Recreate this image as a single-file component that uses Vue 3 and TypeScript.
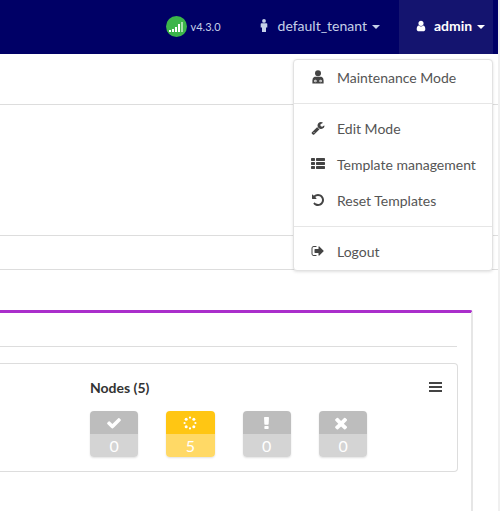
<script setup lang="ts">
const icons: Record<string, string> = {
  wrench: 'M448 1472q0-26-19-45t-45-19-45 19-19 45 19 45 45 19 45-19 19-45zm644-420l-682 682q-37 37-90 37-52 0-91-37l-106-108q-38-36-38-90 0-53 38-91l681-681q39 98 114.5 173.5t173.5 114.5zm634-435q0 39-23 106-47 134-164.5 217.5t-258.5 83.5q-185 0-316.5-131.5t-131.5-316.5 131.5-316.5 316.5-131.5q58 0 121.5 16.5t107.5 46.5q16 11 16 28t-16 28l-293 169v224l193 107q5-3 79-48.5t135.5-81 70.5-35.5q15 0 23.5 10t8.5 25z',
  list: 'M512 1248v192q0 40-28 68t-68 28h-320q-40 0-68-28t-28-68v-192q0-40 28-68t68-28h320q40 0 68 28t28 68zm0-512v192q0 40-28 68t-68 28h-320q-40 0-68-28t-28-68v-192q0-40 28-68t68-28h320q40 0 68 28t28 68zm1280 512v192q0 40-28 68t-68 28h-960q-40 0-68-28t-28-68v-192q0-40 28-68t68-28h960q40 0 68 28t28 68zm-1280-1024v192q0 40-28 68t-68 28h-320q-40 0-68-28t-28-68v-192q0-40 28-68t68-28h320q40 0 68 28t28 68zm1280 512v192q0 40-28 68t-68 28h-960q-40 0-68-28t-28-68v-192q0-40 28-68t68-28h960q40 0 68 28t28 68zm0-512v192q0 40-28 68t-68 28h-960q-40 0-68-28t-28-68v-192q0-40 28-68t68-28h960q40 0 68 28t28 68z',
  undo: 'M1664 896q0 156-61 298t-164 245-245 164-298 61q-172 0-327-72.5t-264-204.5q-7-10-6.5-22.5t8.5-20.5l137-138q10-9 25-9 16 2 23 12 73 95 179 147t225 52q104 0 198.5-40.5t163.5-109.5 109.5-163.5 40.5-198.5-40.5-198.5-109.5-163.5-163.5-109.5-198.5-40.5q-98 0-188 35.5t-160 101.5l137 138q31 30 14 69-17 40-59 40h-448q-26 0-45-19t-19-45v-448q0-42 40-59 39-17 69 14l130 129q107-101 244.5-156.5t284.5-55.5q156 0 298 61t245 164 164 245 61 298z',
  signout: 'M704 1440q0 4 1 20t.5 26.5-3 23.5-10 19.5-20.5 6.5h-320q-119 0-203.5-84.5t-84.5-203.5v-704q0-119 84.5-203.5t203.5-84.5h320q13 0 22.5 9.5t9.5 22.5q0 4 1 20t.5 26.5-3 23.5-10 19.5-20.5 6.5h-320q-66 0-113 47t-47 113v704q0 66 47 113t113 47h312l11.5 1 11.5 3 8 5.5 7 9 2 13.5zm928-544q0 26-19 45l-544 544q-19 19-45 19t-45-19-19-45v-288h-448q-26 0-45-19t-19-45v-384q0-26 19-45t45-19h448v-288q0-26 19-45t45-19 45 19l544 544q19 19 19 45z',
  user: 'M1536 1399q0 109-62.5 187t-150.5 78h-854q-88 0-150.5-78t-62.5-187q0-85 8.5-160.5t31.5-152 58.5-131 94-89 134.5-34.5q131 128 313 128t313-128q76 0 134.5 34.5t94 89 58.5 131 31.5 152 8.5 160.5zm-256-887q0 159-112.5 271.5t-271.5 112.5-271.5-112.5-112.5-271.5 112.5-271.5 271.5-112.5 271.5 112.5 112.5 271.5z',
  check: 'M1671 566q0 40-28 68l-724 724-136 136q-28 28-68 28t-68-28l-136-136-362-362q-28-28-28-68t28-68l136-136q28-28 68-28t68 28l294 295 656-657q28-28 68-28t68 28l136 136q28 28 28 68z',
  times: 'M1298 1322q0 40-28 68l-136 136q-28 28-68 28t-68-28l-294-294-294 294q-28 28-68 28t-68-28l-136-136q-28-28-28-68t28-68l294-294-294-294q-28-28-28-68t28-68l136-136q28-28 68-28t68 28l294 294 294-294q28-28 68-28t68 28l136 136q28 28 28 68t-28 68l-294 294 294 294q28 28 28 68z',
  bang: 'M1088 1248v224q0 26-19 45t-45 19h-256q-26 0-45-19t-19-45v-224q0-26 19-45t45-19h256q26 0 45 19t19 45zm30-1056l-28 768q-1 26-20.5 45t-45.5 19h-256q-26 0-45.5-19t-20.5-45l-28-768q-1-26 17.5-45t44.5-19h320q26 0 44.5 19t17.5 45z',
}
const groups = [
  [{ label: 'Maintenance Mode', icon: 'md' }],
  [
    { label: 'Edit Mode', icon: 'wrench' },
    { label: 'Template management', icon: 'list' },
    { label: 'Reset Templates', icon: 'undo' },
  ],
  [{ label: 'Logout', icon: 'signout' }],
]
const tiles = [
  { icon: 'check', size: 16, value: 0, warn: false },
  { icon: 'spin', size: 14, value: 5, warn: true },
  { icon: 'bang', size: 16, value: 0, warn: false },
  { icon: 'times', size: 18, value: 0, warn: false },
]
const spinDots = Array.from({ length: 8 }, (_, i) => ({
  cx: 7 + 5.4 * Math.cos((i * Math.PI) / 4),
  cy: 7 + 5.4 * Math.sin((i * Math.PI) / 4),
  r: i % 2 ? 1.5 : 1.1,
}))
</script>

<template>
  <div class="page">
    <header class="navbar">
      <div class="version">
        <span class="signal">
          <svg width="14" height="12" viewBox="0 0 14 12" fill="#fff">
            <rect x="0" y="9" width="2" height="2" /><rect x="3" y="8" width="2" height="3" />
            <rect x="6" y="6" width="2" height="5" /><rect x="9" y="3" width="2" height="8" />
            <rect x="12" y="1" width="2" height="10" opacity=".55" />
          </svg>
        </span>
        <span>v4.3.0</span>
      </div>
      <div class="nav-item tenant">
        <svg class="nav-icon" width="10" height="13" viewBox="0 0 10 13" fill="#c5d0e8">
          <circle cx="5" cy="1.9" r="1.9" /><path d="M2.6 4.2h4.8q.9 0 .9.9v3.3H7V13H3V8.4H1.7V5.1q0-.9.9-.9z" />
        </svg>
        <span>default_tenant</span><i class="caret"></i>
      </div>
      <div class="nav-item active">
        <svg class="nav-icon" width="12" height="12" viewBox="0 0 1792 1792" fill="#fff"><path :d="icons.user" /></svg>
        <span>admin</span><i class="caret"></i>
      </div>
    </header>

    <section class="band first"></section>
    <section class="band second"></section>
    <section class="band third"></section>

    <section class="card">
      <div class="card-head"></div>
      <div class="inner">
        <div class="inner-title"><span>Nodes (5)</span><span class="bars"><i></i><i></i><i></i></span></div>
        <div class="tiles">
          <div v-for="(t, i) in tiles" :key="i" class="tile" :class="{ warn: t.warn }">
            <div class="tile-top">
              <svg v-if="t.icon === 'spin'" width="14" height="14" viewBox="0 0 14 14" fill="#fff">
                <circle v-for="(d, j) in spinDots" :key="j" :cx="d.cx" :cy="d.cy" :r="d.r" />
              </svg>
              <svg v-else-if="t.icon === 'bang'" width="5" height="12" viewBox="672 128 448 1408" preserveAspectRatio="none" fill="#fff"><path :d="icons.bang" /></svg>
              <svg v-else :width="t.size" :height="t.size" viewBox="0 0 1792 1792" fill="#fff"><path :d="icons[t.icon]" /></svg>
            </div>
            <div class="tile-val">{{ t.value }}</div>
          </div>
        </div>
      </div>
    </section>

    <nav class="menu">
      <div v-for="(g, gi) in groups" :key="gi" class="menu-group">
        <div v-for="item in g" :key="item.label" class="menu-item">
          <span class="menu-icon">
            <svg v-if="item.icon === 'md'" width="14" height="14" viewBox="0 0 14 14" fill="#444">
              <circle cx="7" cy="3.2" r="3" />
              <path d="M3.6 6.8h6.8q2.2.8 2.2 3.4v3.2H1.4v-3.2q0-2.6 2.2-3.4z" />
              <circle cx="4.4" cy="11" r="1.2" fill="#fff" /><circle cx="9.6" cy="11" r="1.2" fill="#fff" />
              <circle cx="4.4" cy="11" r=".5" /><circle cx="9.6" cy="11" r=".5" />
            </svg>
            <svg v-else width="14" height="14" viewBox="0 0 1792 1792" fill="#444"><path :d="icons[item.icon]" /></svg>
          </span>
          <span>{{ item.label }}</span>
        </div>
      </div>
    </nav>
  </div>
</template>

<style>
html, body { background: #fff; overflow: hidden; }
</style>

<style scoped>
.page {
  position: relative;
  width: 500px;
  height: 511px;
  overflow: hidden;
  box-sizing: border-box;
  border-right: 2px solid #f0f0f0;
  background: #fff;
  font-family: Lato, sans-serif;
  color: #444;
}
.navbar {
  height: 54px;
  background: #000066;
  display: flex;
  justify-content: flex-end;
  align-items: stretch;
  padding-right: 5px;
  box-sizing: border-box;
}
.version {
  display: flex;
  align-items: center;
  gap: 4px;
  color: #c5d0e8;
  font-size: 11px;
  margin-right: 38px;
  padding-bottom: 1px;
}
.signal {
  width: 21px;
  height: 21px;
  border-radius: 50%;
  background: #3cb54a;
  display: flex;
  align-items: center;
  justify-content: center;
}
.nav-item {
  display: flex;
  align-items: center;
  font-size: 14px;
  box-sizing: border-box;
  padding-bottom: 3px;
}
.tenant {
  color: #c5d0e8;
  padding-right: 19px;
}
.active {
  width: 94px;
  padding-left: 16px;
  background: #14146f;
  color: #fff;
  font-weight: 700;
}
.nav-icon { margin-right: 7px; }
.tenant .nav-icon { margin-right: 9px; }
.caret {
  width: 0;
  height: 0;
  margin-left: 5px;
  margin-top: 2px;
  border-left: 4px solid transparent;
  border-right: 4px solid transparent;
  border-top: 4px solid currentColor;
}
.band { border-bottom: 1px solid #ddd; }
.first { height: 50px; }
.second { height: 130px; }
.third { height: 33px; }
.card {
  width: 473px;
  height: 240px;
  margin-top: 40px;
  box-sizing: border-box;
  padding-right: 14px;
  border-top: 3px solid #aa2ecb;
  border-right: 2px solid #e6e6e6;
  border-radius: 0 3px 0 0;
}
.card-head {
  height: 33px;
  border-bottom: 1px solid #ddd;
}
.inner {
  width: 458px;
  height: 109px;
  margin-top: 16px;
  box-sizing: border-box;
  border: 1px solid #ddd;
  border-left: none;
  border-radius: 0 4px 4px 0;
  padding: 15px 15px 0 90px;
}
.inner-title {
  display: flex;
  justify-content: space-between;
  align-items: center;
  font-size: 14px;
  font-weight: 700;
  color: #333;
  height: 17px;
}
.bars { display: flex; flex-direction: column; gap: 2px; margin-top: -2px; }
.bars i { display: block; width: 13px; height: 2px; background: #444; }
.tiles {
  display: flex;
  gap: 28px;
  margin-top: 15px;
}
.tile {
  width: 48.3px;
  height: 46px;
  border-radius: 4px;
  overflow: hidden;
  box-shadow: 0 1px 2px rgba(0, 0, 0, 0.12);
  color: #fff;
}
.tile-top {
  height: 23px;
  background: #bdbdbd;
  display: flex;
  align-items: center;
  justify-content: center;
}
.tile-val {
  height: 23px;
  background: #d4d4d4;
  text-align: center;
  font-size: 16px;
  line-height: 23px;
}
.warn .tile-top { background: #ffc613; }
.warn .tile-val { background: #ffd966; }
.menu {
  position: absolute;
  left: 293px;
  top: 59px;
  width: 200px;
  box-sizing: border-box;
  background: #fff;
  border: 1px solid #e2e2e2;
  border-radius: 4px;
  box-shadow: 0 1px 3px rgba(0, 0, 0, 0.12);
  font-size: 14px;
  color: #555;
}
.menu-group { padding: 0 0 7px; }
.menu-group + .menu-group { border-top: 1px solid #e6e6e6; padding-top: 7px; }
.menu-group:last-child { padding-bottom: 0; }
.menu-item {
  display: flex;
  align-items: center;
  height: 36px;
  box-sizing: border-box;
  padding: 0 0 2px 17px;
}
.menu-icon {
  width: 26px;
  display: flex;
  align-items: center;
}
</style>
